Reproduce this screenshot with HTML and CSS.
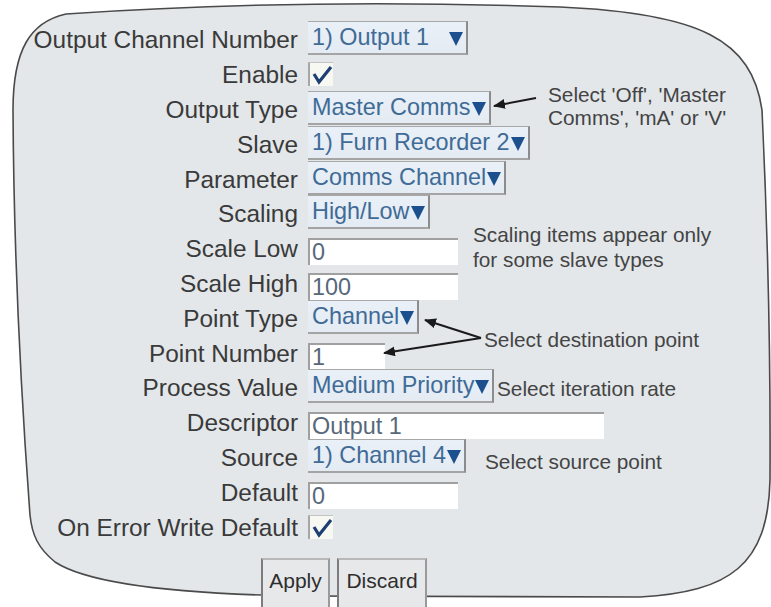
FILE: index.html
```html
<!DOCTYPE html>
<html>
<head>
<meta charset="utf-8">
<link rel="stylesheet" href="styles.css">
</head>
<body>
<div class="screen">
  <svg class="frame" width="771" height="607" viewBox="0 0 771 607">
    <path d="M 66 14 Q 300 -2 560 7 C 700 13 752 40 762 110 Q 771 300 770 480 C 768 565 730 592 640 597 L 300 596 C 180 594 90 585 55 562 C 38 548 32 535 30 515 Q 14 300 13 110 C 13 50 30 22 66 14 Z" fill="#e3e7ea" stroke="#4a4a4a" stroke-width="1.6"/>
  </svg>

  <div class="form">
    <div class="row"><span class="label">Output Channel Number</span><span class="select">1) Output 1<i class="caret caret-gap"></i></span></div>
    <div class="row"><span class="label">Enable</span><span class="check"><svg width="22" height="22" viewBox="0 0 22 22"><path d="M3 10 L8 18 L20 3" fill="none" stroke="#1e3f74" stroke-width="3.2"/></svg></span></div>
    <div class="row"><span class="label">Output Type</span><span class="select">Master Comms<i class="caret"></i></span></div>
    <div class="row"><span class="label">Slave</span><span class="select">1) Furn Recorder 2<i class="caret"></i></span></div>
    <div class="row"><span class="label">Parameter</span><span class="select">Comms Channel<i class="caret"></i></span></div>
    <div class="row"><span class="label">Scaling</span><span class="select">High/Low<i class="caret"></i></span></div>
    <div class="row"><span class="label">Scale Low</span><span class="field field-md">0</span></div>
    <div class="row"><span class="label">Scale High</span><span class="field field-md">100</span></div>
    <div class="row"><span class="label">Point Type</span><span class="select">Channel<i class="caret"></i></span></div>
    <div class="row"><span class="label">Point Number</span><span class="field field-sm">1</span></div>
    <div class="row"><span class="label">Process Value</span><span class="select">Medium Priority<i class="caret"></i></span></div>
    <div class="row"><span class="label">Descriptor</span><span class="field field-lg">Output 1</span></div>
    <div class="row"><span class="label">Source</span><span class="select">1) Channel 4<i class="caret"></i></span></div>
    <div class="row"><span class="label">Default</span><span class="field field-md">0</span></div>
    <div class="row"><span class="label">On Error Write Default</span><span class="check"><svg width="22" height="22" viewBox="0 0 22 22"><path d="M3 11 L8 19 L20 4" fill="none" stroke="#1e3f74" stroke-width="3.2"/></svg></span></div>
  </div>

  <div class="actions">
    <button class="btn btn-apply">Apply</button>
    <button class="btn btn-discard">Discard</button>
  </div>

  <div class="note note-type">Select 'Off', 'Master<br>Comms', 'mA' or 'V'</div>
  <div class="note note-scale">Scaling items appear only<br>for some slave types</div>
  <div class="note note-dest">Select destination point</div>
  <div class="note note-rate">Select iteration rate</div>
  <div class="note note-src">Select source point</div>

  <svg class="arrows" width="771" height="607" viewBox="0 0 771 607">
    <defs>
      <marker id="ah" markerWidth="12" markerHeight="10" refX="11" refY="5" orient="auto" markerUnits="userSpaceOnUse">
        <path d="M0 0 L12 5 L0 10 Z" fill="#1a1a1a"/>
      </marker>
    </defs>
    <line x1="536" y1="98" x2="494" y2="106" stroke="#1a1a1a" stroke-width="2" marker-end="url(#ah)"/>
    <line x1="481" y1="338" x2="425" y2="320" stroke="#1a1a1a" stroke-width="2" marker-end="url(#ah)"/>
    <line x1="481" y1="338" x2="384" y2="353" stroke="#1a1a1a" stroke-width="2" marker-end="url(#ah)"/>
  </svg>
</div>
</body>
</html>
```

FILE: styles.css
```css
html, body {
  margin: 0;
  padding: 0;
  background: #ffffff;
}

.screen {
  position: relative;
  width: 771px;
  height: 607px;
  overflow: hidden;
  font-family: "Liberation Sans", Arial, sans-serif;
}

.frame {
  position: absolute;
  left: 0;
  top: 0;
}

.arrows {
  position: absolute;
  left: 0;
  top: 0;
  pointer-events: none;
}

.form {
  position: relative;
  display: flex;
  flex-direction: column;
  padding-top: 23px;
}

.row {
  display: flex;
  align-items: center;
  height: 34.8px;
}

.label {
  flex: none;
  width: 298px;
  padding-right: 10px;
  box-sizing: content-box;
  text-align: right;
  font-size: 24.4px;
  color: #3a3a3a;
  white-space: nowrap;
}

.select {
  display: inline-flex;
  align-items: center;
  height: 31px;
  margin-top: -4px;
  padding: 0 3px 0 4px;
  background: linear-gradient(#e9f0f8, #e4ebf3);
  border-top: 1px solid #a8a8a8;
  border-right: 2px solid #8c8c8c;
  border-bottom: 2px solid #a4a4a4;
  font-size: 23.4px;
  color: #3f6b96;
  white-space: nowrap;
}

.caret {
  display: inline-block;
  width: 0;
  height: 0;
  margin-left: 1px;
  margin-top: 3px;
  border-left: 7px solid transparent;
  border-right: 7px solid transparent;
  border-top: 14px solid #1c4f8e;
}

.caret-gap {
  margin-left: 20px;
}

.field {
  display: inline-flex;
  align-items: center;
  height: 27px;
  margin-top: 5px;
  padding-left: 2px;
  background: #ffffff;
  border-top: 2px solid #a0a0a0;
  border-left: 2px solid #a0a0a0;
  font-size: 23.4px;
  color: #56687a;
  white-space: nowrap;
  box-sizing: border-box;
}

.field-sm { width: 77px; }
.field-md { width: 150px; }
.field-lg { width: 296px; }

.check {
  display: inline-flex;
  align-items: center;
  justify-content: center;
  width: 25px;
  height: 24px;
  margin-top: -2px;
  background: #f7f8f2;
  border-left: 2px solid #a6a6a6;
  border-top: 1px solid #c4c4c4;
  box-sizing: border-box;
}

.actions {
  position: relative;
  display: flex;
  gap: 7px;
  padding-left: 261px;
  margin-top: 13px;
}

.btn {
  height: 50px;
  margin: 0;
  padding: 0 0 6px 0;
  background: #e7e8e9;
  border-top: 2px solid #b8b8b8;
  border-left: 2px solid #7c7c7c;
  border-right: 2px solid #9a9a9a;
  border-bottom: none;
  font-family: "Liberation Sans", Arial, sans-serif;
  font-size: 21px;
  color: #2e2e2e;
}

.btn-apply { width: 69px; }
.btn-discard { width: 90px; }

.note {
  position: absolute;
  font-size: 20.8px;
  line-height: 23px;
  color: #444444;
  white-space: nowrap;
}

.note-type { left: 548px; top: 83px; }
.note-scale { left: 473px; top: 222px; line-height: 25px; }
.note-dest { left: 484px; top: 328px; }
.note-rate { left: 497px; top: 377px; }
.note-src { left: 485px; top: 450px; }
```
